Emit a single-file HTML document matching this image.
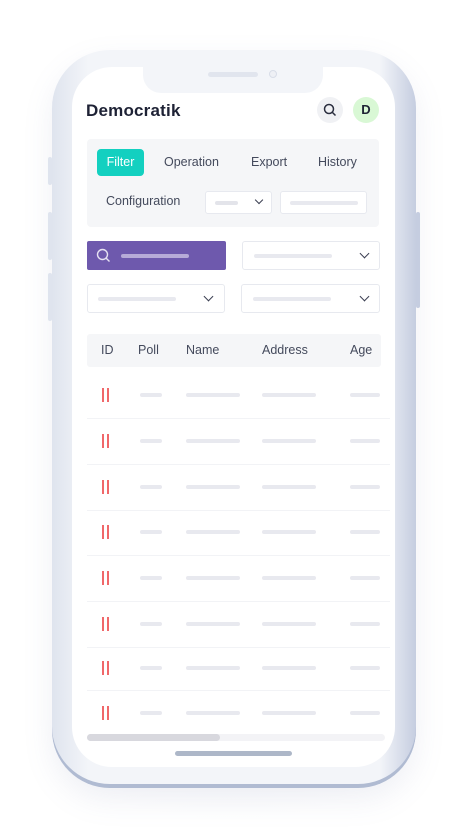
<!DOCTYPE html>
<html><head><style>
*{margin:0;padding:0;box-sizing:border-box}
body{width:465px;height:836px;background:#fff;position:relative;overflow:hidden;font-family:"Liberation Sans",sans-serif;color:#3b3f52}
.a{position:absolute}
.ph{left:52px;top:50px;width:364px;height:738px;border-radius:58px;background:linear-gradient(90deg,#dfe4ee,#f3f5f9 10%,#f3f5f9 90%,#c5cde0);box-shadow:0 12px 30px rgba(120,130,170,.12),inset 0 -4px 0 #b0bbd2}
.sc{left:72px;top:67px;width:323px;height:700px;border-radius:40px;background:#fff}
.notch{left:143px;top:67px;width:180px;height:26px;background:#f3f5f9;border-radius:0 0 18px 18px}
.bar{height:4px;border-radius:2px;background:#e8e9ef}
.box{background:#fff;border:1px solid #e7e9ef;border-radius:3px}
.chev{width:7px;height:7px;border-right:1.5px solid #3b3f52;border-bottom:1.5px solid #3b3f52;transform:rotate(45deg)}
.t{font-size:12.5px;color:#444a5c}
.sep{left:87px;width:303px;height:1px;background:#f2f3f6}
.id{width:2px;height:14px;background:#f0686a}
</style></head><body>
<div class="a" style="left:30px;top:720px;width:400px;height:100px;background:radial-gradient(ellipse at center top,rgba(200,205,225,.15),transparent 70%)"></div>
<div class="a ph"></div>
<div class="a" style="left:48px;top:157px;width:4px;height:28px;background:#dfe4ee;border-radius:2px"></div>
<div class="a" style="left:48px;top:212px;width:4px;height:48px;background:#dfe4ee;border-radius:2px"></div>
<div class="a" style="left:48px;top:273px;width:4px;height:48px;background:#dfe4ee;border-radius:2px"></div>
<div class="a" style="left:416px;top:212px;width:4px;height:96px;background:#c5cde0;border-radius:2px"></div>
<div class="a sc"></div>
<div class="a notch"></div>
<div class="a" style="left:208px;top:72px;width:50px;height:5px;border-radius:3px;background:#e1e5ee"></div>
<div class="a" style="left:269px;top:70px;width:8px;height:8px;border-radius:50%;border:1px solid #d8dde8;background:#eef0f5"></div>

<div class="a" style="left:86px;top:101px;font-size:17px;font-weight:bold;color:#1e2235;letter-spacing:.2px">Democratik</div>
<div class="a" style="left:317px;top:97px;width:26px;height:26px;border-radius:50%;background:#f0f1f4"></div>
<svg class="a" style="left:323px;top:103px" width="14" height="14" viewBox="0 0 14 14"><circle cx="6" cy="6" r="4.5" fill="none" stroke="#2a2e3f" stroke-width="1.5"/><path d="M9.5 9.5L12.5 12.5" stroke="#2a2e3f" stroke-width="1.5"/></svg>
<div class="a" style="left:353px;top:97px;width:26px;height:26px;border-radius:50%;background:#d9f8d5;text-align:center;line-height:26px;font-weight:bold;font-size:13px;color:#1e2235">D</div>

<div class="a" style="left:87px;top:139px;width:292px;height:88px;background:#f5f6f8;border-radius:4px"></div>
<div class="a" style="left:97px;top:149px;width:47px;height:27px;background:#13d0c0;border-radius:4px;color:#fff;font-size:12.5px;text-align:center;line-height:27px">Filter</div>
<div class="a t" style="left:164px;top:155px">Operation</div>
<div class="a t" style="left:251px;top:155px">Export</div>
<div class="a t" style="left:318px;top:155px">History</div>
<div class="a t" style="left:106px;top:194px">Configuration</div>
<div class="a box" style="left:205px;top:191px;width:67px;height:23px"></div>
<div class="a bar" style="left:215px;top:201px;width:23px;background:#e3e4ea"></div>
<div class="a chev" style="left:256px;top:197px;width:6px;height:6px"></div>
<div class="a box" style="left:280px;top:191px;width:87px;height:23px"></div>
<div class="a bar" style="left:290px;top:201px;width:68px"></div>

<div class="a" style="left:87px;top:241px;width:139px;height:29px;background:#6e59ad;border-radius:2px"></div>
<svg class="a" style="left:96px;top:248px" width="15" height="15" viewBox="0 0 15 15"><circle cx="6.5" cy="6.5" r="5" fill="none" stroke="#e6e2f2" stroke-width="1.4"/><path d="M10.2 10.2L13.5 13.5" stroke="#e6e2f2" stroke-width="1.4"/></svg>
<div class="a bar" style="left:121px;top:254px;width:68px;background:#b7abd8"></div>
<div class="a box" style="left:242px;top:241px;width:138px;height:29px"></div>
<div class="a bar" style="left:254px;top:254px;width:78px"></div>
<div class="a chev" style="left:361px;top:250px"></div>
<div class="a box" style="left:87px;top:284px;width:138px;height:29px"></div>
<div class="a bar" style="left:98px;top:297px;width:78px"></div>
<div class="a chev" style="left:205px;top:293px"></div>
<div class="a box" style="left:241px;top:284px;width:139px;height:29px"></div>
<div class="a bar" style="left:253px;top:297px;width:78px"></div>
<div class="a chev" style="left:361px;top:293px"></div>

<div class="a" style="left:87px;top:334px;width:294px;height:33px;background:#f5f6f8;border-radius:3px"></div>
<div class="a t" style="left:101px;top:343px">ID</div>
<div class="a t" style="left:138px;top:343px">Poll</div>
<div class="a t" style="left:186px;top:343px">Name</div>
<div class="a t" style="left:262px;top:343px">Address</div>
<div class="a t" style="left:350px;top:343px">Age</div>

<div id="rows"></div>
<script>
var ys=[395,441,487,532,578,624,668,713],h='';
ys.forEach(function(y,i){
h+='<div class="a id" style="left:102px;top:'+(y-7)+'px"></div><div class="a id" style="left:107px;top:'+(y-7)+'px"></div>';
h+='<div class="a bar" style="left:140px;top:'+(y-2)+'px;width:22px"></div>';
h+='<div class="a bar" style="left:186px;top:'+(y-2)+'px;width:54px"></div>';
h+='<div class="a bar" style="left:262px;top:'+(y-2)+'px;width:54px"></div>';
h+='<div class="a bar" style="left:350px;top:'+(y-2)+'px;width:30px"></div>';
if(i<7)h+='<div class="a sep" style="top:'+(y+23-(i>5?1:0))+'px"></div>';
});
document.getElementById('rows').innerHTML=h;
</script>
<div class="a" style="left:87px;top:734px;width:298px;height:7px;border-radius:4px;background:#f3f3f6"></div>
<div class="a" style="left:87px;top:734px;width:133px;height:7px;border-radius:4px;background:#d8d8de"></div>
<div class="a" style="left:175px;top:751px;width:117px;height:5px;border-radius:3px;background:#adb7c8"></div>
</body></html>
